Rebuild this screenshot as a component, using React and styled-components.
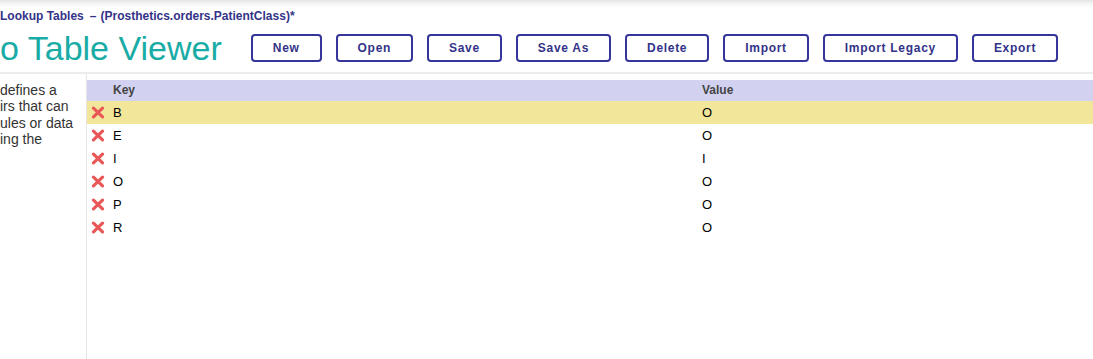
import React from "react";
import styled, { createGlobalStyle } from "styled-components";

const GlobalStyle = createGlobalStyle`
  html, body {
    margin: 0;
    padding: 0;
    background: #fff;
    overflow: hidden;
  }
  body {
    font-family: "Liberation Sans", Arial, sans-serif;
  }
`;

const rows = [
  { key: "B", value: "O", selected: true },
  { key: "E", value: "O" },
  { key: "I", value: "I" },
  { key: "O", value: "O" },
  { key: "P", value: "O" },
  { key: "R", value: "O" }
];

const actions = [
  "New",
  "Open",
  "Save",
  "Save As",
  "Delete",
  "Import",
  "Import Legacy",
  "Export"
];

const Page = styled.div`
  display: flex;
  flex-direction: column;
  height: 100vh;
`;

const Header = styled.header`
  background: linear-gradient(#e4e4e4 0px, #f6f6f6 4px, #fff 8px);
  padding-top: 9px;
  border-bottom: 2px solid #ececec;
  padding-bottom: 6px;
`;

const Breadcrumb = styled.div`
  display: flex;
  align-items: center;
  font-size: 12px;
  font-weight: bold;
  color: #333388;
  line-height: 14px;
`;

const Crumb = styled.span`
  white-space: pre;
`;

const Dash = styled.span`
  margin: 0 4px 0 6px;
`;

const TitleRow = styled.div`
  display: flex;
  align-items: center;
  margin-top: 7px;
`;

const Title = styled.h1`
  margin: 0 29px 0 0;
  font-size: 34px;
  font-weight: normal;
  line-height: 36px;
  color: #19aca6;
  white-space: nowrap;
`;

const Toolbar = styled.div`
  display: flex;
  gap: 14px;
`;

const Button = styled.button`
  height: 28px;
  padding: 0 20px;
  border: 2px solid #35359a;
  border-radius: 4px;
  background: #fff;
  color: #333388;
  font-family: "Liberation Sans", Arial, sans-serif;
  font-size: 12px;
  font-weight: bold;
  letter-spacing: 0.7px;
  cursor: pointer;
`;

const Body = styled.div`
  flex: 1;
  display: flex;
  min-height: 0;
`;

const Sidebar = styled.aside`
  width: 86px;
  flex: 0 0 86px;
  border-right: 1px solid #e6e6e6;
  padding-top: 8px;
  font-size: 14px;
  line-height: 16.4px;
  color: #333;
  white-space: nowrap;
  overflow: hidden;
`;

const Content = styled.main`
  flex: 1;
  padding-top: 6px;
`;

const Grid = styled.div`
  display: grid;
  grid-template-columns: 26px 589px 1fr;
`;

const HeadCell = styled.div`
  background: #d2d2f0;
  height: 21px;
  line-height: 21px;
  font-size: 12px;
  font-weight: bold;
  color: #444;
`;

const Cell = styled.div`
  height: 23px;
  display: flex;
  align-items: center;
  font-size: 13px;
  color: #000;
  background: ${p => (p.$selected ? "#f2e69b" : "transparent")};
`;

const IconCell = styled(Cell)`
  padding-left: 4px;
`;

const RemoveIcon = () => (
  <svg width="14" height="13" viewBox="0 0 14 13">
    <path
      d="M2.5 2.2 L11.5 10.8 M11.5 2.2 L2.5 10.8"
      stroke="#e95757"
      strokeWidth="3.2"
      strokeLinecap="round"
      fill="none"
    />
  </svg>
);

export default function App() {
  return (
    <Page>
      <GlobalStyle />
      <Header>
        <Breadcrumb>
          <Crumb>Lookup Tables</Crumb>
          <Dash>–</Dash>
          <Crumb>(Prosthetics.orders.PatientClass)*</Crumb>
        </Breadcrumb>
        <TitleRow>
          <Title>o Table Viewer</Title>
          <Toolbar>
            {actions.map(a => (
              <Button key={a} type="button">
                {a}
              </Button>
            ))}
          </Toolbar>
        </TitleRow>
      </Header>
      <Body>
        <Sidebar>
          defines a
          <br />
          irs that can
          <br />
          ules or data
          <br />
          ing the
        </Sidebar>
        <Content>
          <Grid>
            <HeadCell />
            <HeadCell>Key</HeadCell>
            <HeadCell>Value</HeadCell>
            {rows.map(r => (
              <React.Fragment key={r.key}>
                <IconCell $selected={r.selected}>
                  <RemoveIcon />
                </IconCell>
                <Cell $selected={r.selected}>{r.key}</Cell>
                <Cell $selected={r.selected}>{r.value}</Cell>
              </React.Fragment>
            ))}
          </Grid>
        </Content>
      </Body>
    </Page>
  );
}
